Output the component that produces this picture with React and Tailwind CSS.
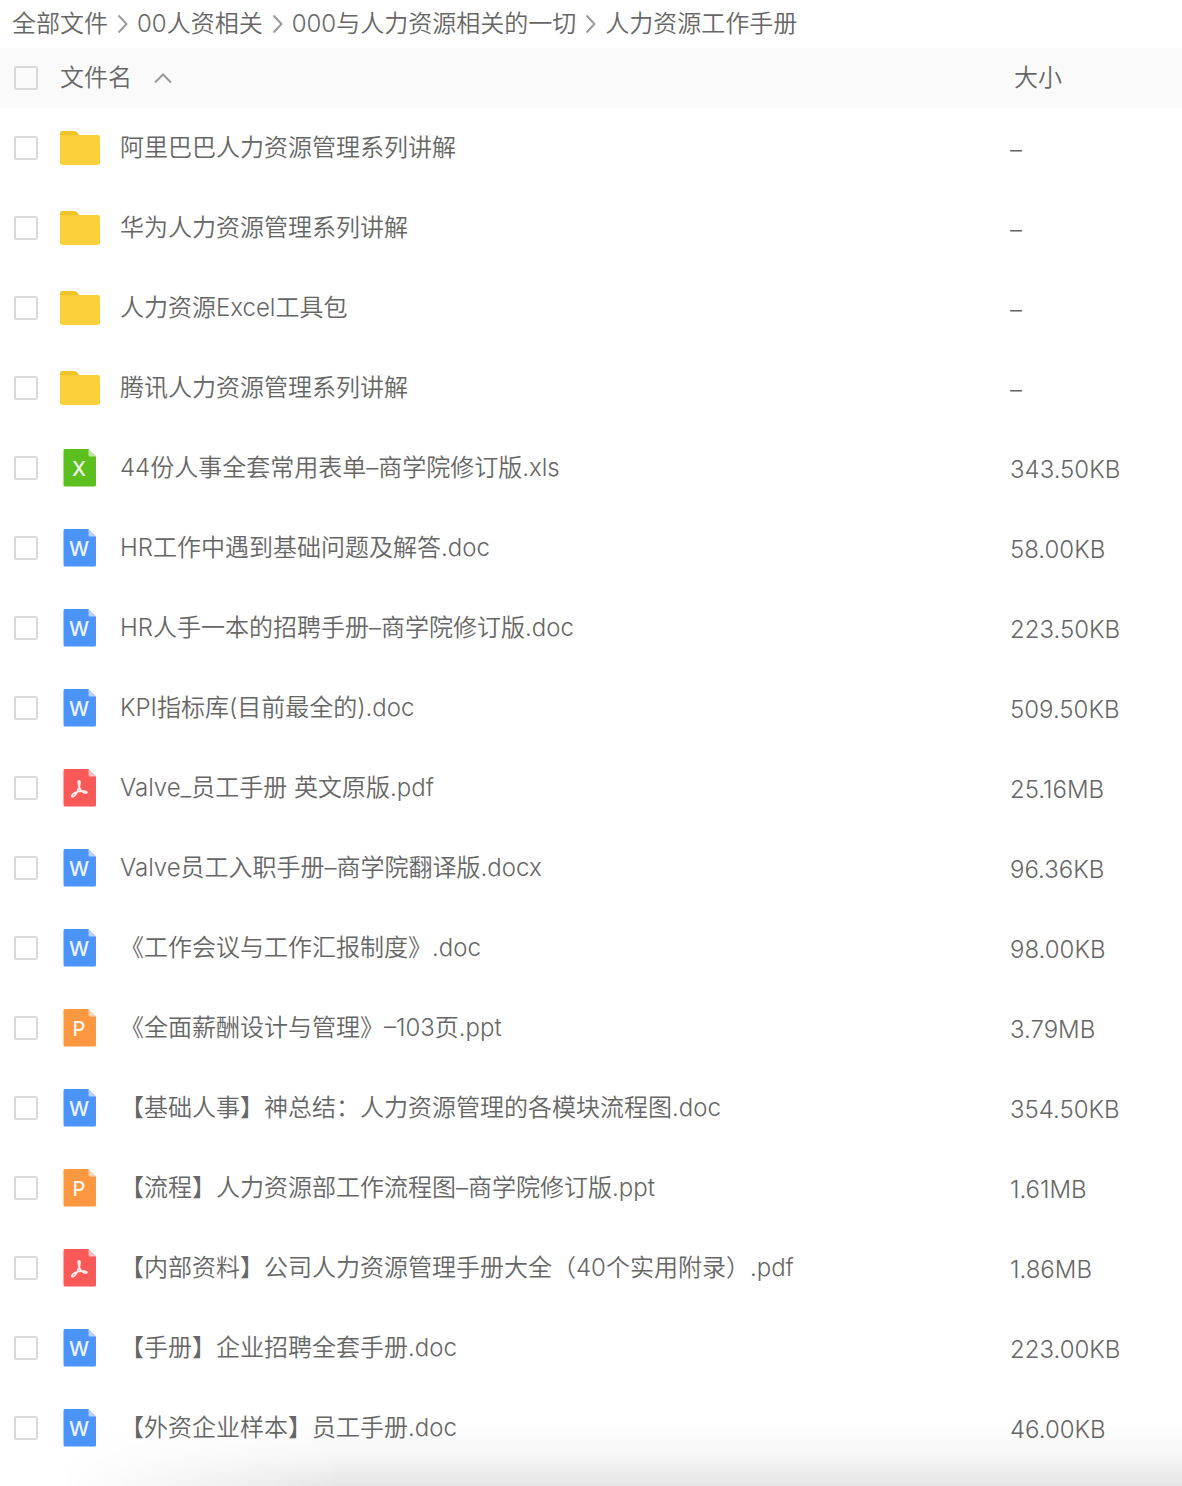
import { useState } from 'react';

const breadcrumbs = ['全部文件', '00人资相关', '000与人力资源相关的一切', '人力资源工作手册'];

const files = [
    { name: '阿里巴巴人力资源管理系列讲解', type: 'folder', size: '–' },
    { name: '华为人力资源管理系列讲解', type: 'folder', size: '–' },
    { name: '人力资源Excel工具包', type: 'folder', size: '–' },
    { name: '腾讯人力资源管理系列讲解', type: 'folder', size: '–' },
    { name: '44份人事全套常用表单–商学院修订版.xls', type: 'excel', size: '343.50KB' },
    { name: 'HR工作中遇到基础问题及解答.doc', type: 'word', size: '58.00KB' },
    { name: 'HR人手一本的招聘手册–商学院修订版.doc', type: 'word', size: '223.50KB' },
    { name: 'KPI指标库(目前最全的).doc', type: 'word', size: '509.50KB' },
    { name: 'Valve_员工手册 英文原版.pdf', type: 'pdf', size: '25.16MB' },
    { name: 'Valve员工入职手册–商学院翻译版.docx', type: 'word', size: '96.36KB' },
    { name: '《工作会议与工作汇报制度》.doc', type: 'word', size: '98.00KB' },
    { name: '《全面薪酬设计与管理》–103页.ppt', type: 'ppt', size: '3.79MB' },
    { name: '【基础人事】神总结：人力资源管理的各模块流程图.doc', type: 'word', size: '354.50KB' },
    { name: '【流程】人力资源部工作流程图–商学院修订版.ppt', type: 'ppt', size: '1.61MB' },
    { name: '【内部资料】公司人力资源管理手册大全（40个实用附录）.pdf', type: 'pdf', size: '1.86MB' },
    { name: '【手册】企业招聘全套手册.doc', type: 'word', size: '223.00KB' },
    { name: '【外资企业样本】员工手册.doc', type: 'word', size: '46.00KB' },
];

const docColors = {
    excel: 'text-[#5bc01e]',
    word: 'text-[#4a94fb]',
    pdf: 'text-[#fb5858]',
    ppt: 'text-[#fd9740]',
};

// Letter shown in the middle of each document icon, pdf has its own mark
const docLetters = {
    excel: 'X',
    word: 'W',
    ppt: 'P',
};

const FileIcon = ({ type }) => {
    if (type === 'folder') {
        return (
            <svg viewBox="0 0 40 40" className="block size-10 shrink-0" aria-hidden="true">
                <path d="M0 5.5A2.5 2.5 0 0 1 2.5 3H14c1.5 0 2 .5 3 1.5l3 3v8H0z" fill="#f0c22a" />
                <path d="M0 7h37.5A2.5 2.5 0 0 1 40 9.5v25a2.5 2.5 0 0 1-2.5 2.5h-35A2.5 2.5 0 0 1 0 34.5z" fill="#fdd03a" />
            </svg>
        );
    }

    return (
        <svg viewBox="0 0 40 40" className={`block size-10 shrink-0 ${docColors[type]}`} aria-hidden="true">
            <path d="M5 1h23.5l7.5 7.5V37a1.5 1.5 0 0 1-1.5 1.5H5A1.5 1.5 0 0 1 3.5 37V2.5A1.5 1.5 0 0 1 5 1z" fill="currentColor" />
            <path d="M28.500 1l7.500 7.500h-6A1.500 1.500 0 0 1 28.500 7z" fill="#fff" fillOpacity="0.6" />
            {type === 'pdf' ? (
                <path
                    fill="none"
                    stroke="#fff"
                    strokeOpacity="0.9"
                    strokeWidth="1.7"
                    d="M18.2 13.2c1.7-1.200 2.300.8 1.500 4-.9 3.800-4 10.800-6.700 11.500-2.300.5-1.200-2.600 2-4 3.700-1.500 9.600-2.300 11.500-1.100 1.500 1.500-1.400 1.900-3.400.6-2.600-1.800-4.800-6.500-4.900-11z"
                />
            ) : (
                <text x="19" y="28" textAnchor="middle" fill="#fff" fillOpacity="0.92" className="text-[20px] font-medium">
                    {docLetters[type]}
                </text>
            )}
        </svg>
    );
};

const Checkbox = ({ label, checked, onChange }) => (
    <input
        type="checkbox"
        aria-label={label}
        checked={checked}
        onChange={onChange}
        className="block size-6 appearance-none rounded-xs border-2 border-[#dadada] checked:border-[#4a94fb] checked:bg-[#4a94fb]"
    />
);

const App = () => {
    const [selected, setSelected] = useState([]);

    const toggle = (name) => {
        setSelected((prev) => (prev.includes(name) ? prev.filter((n) => n !== name) : [...prev, name]));
    };

    const toggleAll = () => {
        setSelected(selected.length === files.length ? [] : files.map((f) => f.name));
    };

    return (
        <div className="relative min-h-screen bg-white pb-4 font-['Inter','Noto_Sans_CJK_SC',sans-serif] text-2xl leading-8 font-[350] text-[#666]">
            <nav aria-label="路径" className="flex h-12 items-center gap-2 px-3">
                {breadcrumbs.map((item, index) => (
                    <div key={item} className="flex items-center gap-2 whitespace-nowrap">
                        {index > 0 && (
                            <svg viewBox="0 0 13 20" className="h-5 w-[13px]" fill="none" stroke="#9a9a9a" strokeWidth="2" aria-hidden="true">
                                <path d="M2.5 1.5l8 8.5-8 8.5" />
                            </svg>
                        )}
                        <a href="#">{item}</a>
                    </div>
                ))}
            </nav>

            <table className="w-full table-fixed text-left">
                <thead className="bg-[#fafafa]">
                    <tr className="h-15">
                        <th className="w-15 pl-3.5">
                            <Checkbox label="全选" checked={selected.length === files.length} onChange={toggleAll} />
                        </th>
                        <th className="font-[350]">
                            <button type="button" className="flex items-center gap-5.5">
                                文件名
                                <svg viewBox="0 0 18 12" className="h-3 w-4.5" fill="none" stroke="#9a9a9a" strokeWidth="2" aria-hidden="true">
                                    <path d="M1 10.5l8-8 8 8" />
                                </svg>
                            </button>
                        </th>
                        <th className="w-43 pl-1 font-[350]">大小</th>
                    </tr>
                </thead>
                <tbody>
                    {files.map((file) => (
                        <tr key={file.name} className="h-20">
                            <td className="pl-3.5">
                                <Checkbox label={file.name} checked={selected.includes(file.name)} onChange={() => toggle(file.name)} />
                            </td>
                            <td>
                                <div className="flex items-center gap-5">
                                    <FileIcon type={file.type} />
                                    <span className="truncate">{file.name}</span>
                                </div>
                            </td>
                            <td className="pt-1">{file.size}</td>
                        </tr>
                    ))}
                </tbody>
            </table>

            {/* Soft shade along the bottom edge */}
            <div className="pointer-events-none absolute inset-x-0 bottom-0 h-16 bg-linear-to-t from-black/10 via-black/3 to-transparent mask-[linear-gradient(to_right,transparent_60px,black_340px)]" />
        </div>
    );
};

export default App;
